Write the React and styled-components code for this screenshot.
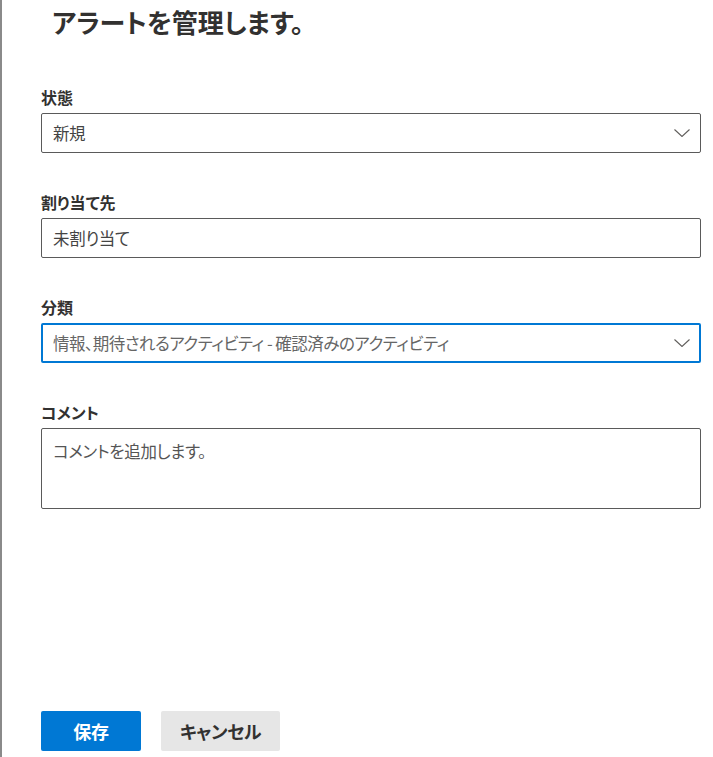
import React from "react";
import styled, { createGlobalStyle } from "styled-components";

const GlobalStyle = createGlobalStyle`
  html, body {
    margin: 0;
    padding: 0;
    background: #ffffff;
  }
  body {
    font-family: "Noto Sans CJK JP", "Noto Sans", sans-serif;
    font-feature-settings: "palt";
    color: #323130;
  }
`;

const Panel = styled.div`
  box-sizing: border-box;
  height: 757px;
  border-left: 2px solid #8a8a8a;
  padding: 4px 12px 6px 39px;
  display: flex;
  flex-direction: column;
`;

const Title = styled.h2`
  margin: 0 0 47px 11px;
  font-size: 26px;
  line-height: 36px;
  font-weight: 600;
  color: #323130;
`;

const Fields = styled.div`
  display: flex;
  flex-direction: column;
  gap: 39px;
`;

const Field = styled.div`
  display: flex;
  flex-direction: column;
`;

const Label = styled.label`
  font-size: 16px;
  line-height: 20px;
  font-weight: 700;
  color: #323130;
  margin-bottom: 6px;
`;

const Box = styled.div`
  box-sizing: border-box;
  height: 40px;
  border: ${(p) => (p.$focused ? "2px solid #0078d4" : "1px solid #5a5a5a")};
  border-radius: 2px;
  display: flex;
  align-items: center;
  padding: 0 ${(p) => (p.$focused ? 9 : 10)}px 0 ${(p) => (p.$focused ? 10 : 11)}px;
  background: #fff;
`;

const BoxText = styled.span`
  flex: 1;
  font-size: 16.5px;
  letter-spacing: -0.5px;
  color: ${(p) => (p.$muted ? "#666666" : "#444444")};
  white-space: nowrap;
  overflow: hidden;
`;

const TextInput = styled.input`
  box-sizing: border-box;
  height: 40px;
  border: 1px solid #5a5a5a;
  border-radius: 2px;
  padding: 0 11px;
  font: inherit;
  font-size: 16.5px;
  letter-spacing: -0.3px;
  color: #444444;
  outline: none;
`;

const TextArea = styled.textarea`
  box-sizing: border-box;
  height: 81px;
  border: 1px solid #5a5a5a;
  border-radius: 2px;
  padding: 10px 11px;
  font: inherit;
  font-size: 16.5px;
  letter-spacing: -0.3px;
  line-height: 24px;
  color: #444444;
  resize: none;
  outline: none;
  &::placeholder {
    color: #555555;
  }
`;

const Footer = styled.div`
  margin-top: auto;
  display: flex;
  gap: 20px;
`;

const Button = styled.button`
  box-sizing: border-box;
  height: 40px;
  width: ${(p) => (p.$primary ? 100 : 119)}px;
  padding: 0;
  border: none;
  border-radius: 2px;
  background: ${(p) => (p.$primary ? "#0078d4" : "#e6e6e6")};
  color: ${(p) => (p.$primary ? "#ffffff" : "#323130")};
  font: inherit;
  font-size: 18px;
  letter-spacing: -0.3px;
  font-weight: 700;
  cursor: pointer;
`;

const Chevron = () => (
  <svg width="16" height="8" viewBox="0 0 16 8" fill="none">
    <path d="M0.5 0.5 L8 7.5 L15.5 0.5" stroke="#605e5c" strokeWidth="1.1" />
  </svg>
);

const Dropdown = ({ value, muted, focused }) => (
  <Box role="combobox" $focused={focused}>
    <BoxText $muted={muted}>{value}</BoxText>
    <Chevron />
  </Box>
);

export default function App() {
  return (
    <>
      <GlobalStyle />
      <Panel>
        <Title>アラートを管理します。</Title>
        <Fields>
          <Field>
            <Label>状態</Label>
            <Dropdown value="新規" />
          </Field>
          <Field>
            <Label>割り当て先</Label>
            <TextInput defaultValue="未割り当て" />
          </Field>
          <Field>
            <Label>分類</Label>
            <Dropdown
              value="情報、期待されるアクティビティ - 確認済みのアクティビティ"
              muted
              focused
            />
          </Field>
          <Field>
            <Label>コメント</Label>
            <TextArea placeholder="コメントを追加します。" />
          </Field>
        </Fields>
        <Footer>
          <Button $primary>保存</Button>
          <Button>キャンセル</Button>
        </Footer>
      </Panel>
    </>
  );
}
